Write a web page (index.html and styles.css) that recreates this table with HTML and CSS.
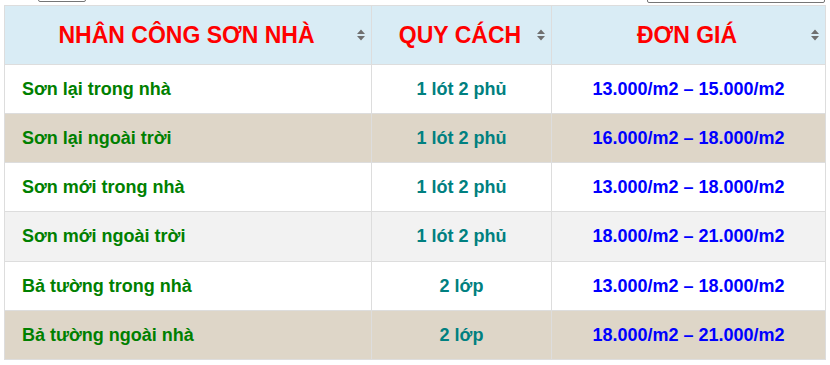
FILE: index.html
```html
<!DOCTYPE html>
<html lang="vi">
<head>
<meta charset="utf-8">
<title>Bảng giá nhân công sơn nhà</title>
<link rel="stylesheet" href="styles.css">
</head>
<body>
<div class="wrap">
  <div class="controls">
    <div class="len-box"></div>
    <div class="search-box"></div>
  </div>
  <table class="price">
    <thead>
      <tr>
        <th class="c1"><span>NHÂN CÔNG SƠN NHÀ</span><svg class="sort" width="8" height="12" viewBox="0 0 8 12"><path d="M0 5 L4 0.5 L8 5 Z M0 7 L8 7 L4 11.5 Z"/></svg></th>
        <th class="c2"><span>QUY CÁCH</span><svg class="sort" width="8" height="12" viewBox="0 0 8 12"><path d="M0 5 L4 0.5 L8 5 Z M0 7 L8 7 L4 11.5 Z"/></svg></th>
        <th class="c3"><span>ĐƠN GIÁ</span><svg class="sort" width="8" height="12" viewBox="0 0 8 12"><path d="M0 5 L4 0.5 L8 5 Z M0 7 L8 7 L4 11.5 Z"/></svg></th>
      </tr>
    </thead>
    <tbody>
      <tr class="white"><td class="name">Sơn lại trong nhà</td><td class="spec">1 lót 2 phủ</td><td class="cost">13.000/m2 – 15.000/m2</td></tr>
      <tr class="beige"><td class="name">Sơn lại ngoài trời</td><td class="spec">1 lót 2 phủ</td><td class="cost">16.000/m2 – 18.000/m2</td></tr>
      <tr class="white"><td class="name">Sơn mới trong nhà</td><td class="spec">1 lót 2 phủ</td><td class="cost">13.000/m2 – 18.000/m2</td></tr>
      <tr class="grey"><td class="name">Sơn mới ngoài trời</td><td class="spec">1 lót 2 phủ</td><td class="cost">18.000/m2 – 21.000/m2</td></tr>
      <tr class="white"><td class="name">Bả tường trong nhà</td><td class="spec">2 lớp</td><td class="cost">13.000/m2 – 18.000/m2</td></tr>
      <tr class="beige"><td class="name">Bả tường ngoài nhà</td><td class="spec">2 lớp</td><td class="cost">18.000/m2 – 21.000/m2</td></tr>
    </tbody>
  </table>
</div>
</body>
</html>
```
FILE: styles.css
```css
html, body {
  margin: 0;
  padding: 0;
  background: #ffffff;
}

body {
  font-family: "Liberation Sans", Arial, sans-serif;
}

.wrap {
  padding-left: 4px;
  width: 822px;
}

.controls {
  height: 5px;
  overflow: hidden;
  display: flex;
  justify-content: space-between;
  align-items: flex-end;
}

.len-box {
  width: 46px;
  height: 20px;
  margin-left: 34px;
  margin-bottom: 3px;
  border: 1px solid #767676;
  border-radius: 2px;
}

.search-box {
  width: 176px;
  height: 20px;
  margin-right: 1px;
  margin-bottom: 2px;
  border: 1px solid #767676;
  border-radius: 2px;
}

.price {
  border-collapse: collapse;
  width: 822px;
  table-layout: fixed;
  font-weight: bold;
}

.price th,
.price td {
  border: 1px solid #dddddd;
}

.price th {
  background: #d9ecf5;
  color: #ff0000;
  font-size: 23px;
  line-height: 26px;
  padding: 16px 20px 16px 17px;
  position: relative;
  text-align: center;
}

.price th.c1 { width: 329px; }
.price th.c2 { width: 142px; }

.sort {
  position: absolute;
  right: 6px;
  top: 50%;
  margin-top: -6px;
  fill: #6f6f6f;
}

.price td {
  font-size: 18px;
  line-height: 22px;
  padding: 13px 10px 13px 17px;
}

.price td.name {
  color: #008000;
  text-align: left;
}

.price td.spec {
  color: #008080;
  text-align: center;
  padding-left: 10px;
}

.price td.cost {
  color: #0000ff;
  text-align: center;
  padding-left: 10px;
}

tr.white td { background: #ffffff; }
tr.beige td { background: #ded6c8; }
tr.grey td { background: #f2f2f2; }
tr.grey td { padding-bottom: 14px; }
```
